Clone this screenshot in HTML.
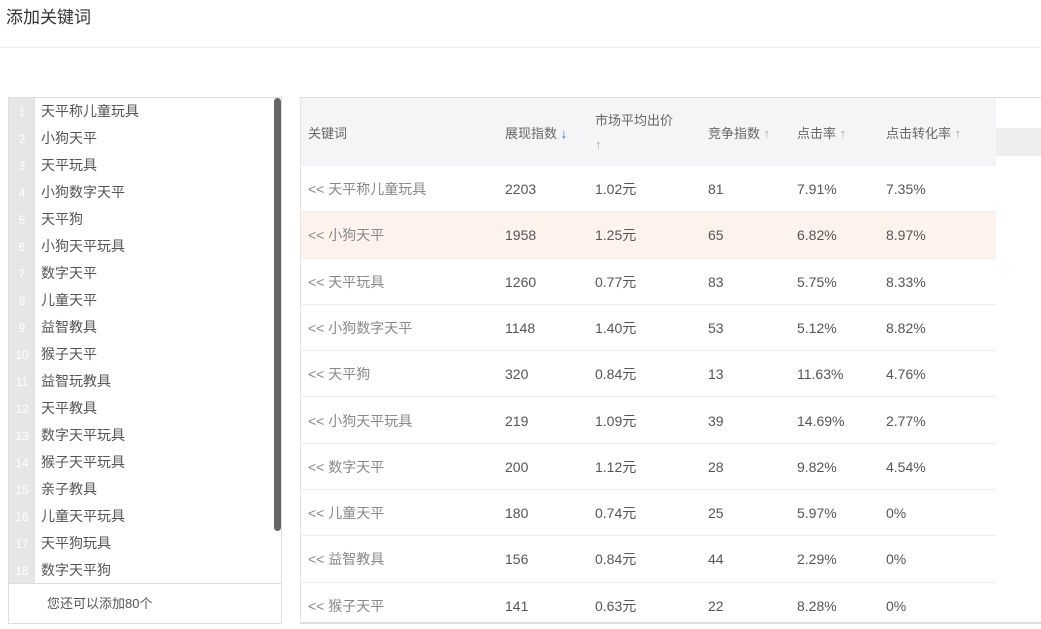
<!DOCTYPE html>
<html><head><meta charset="utf-8"><style>
*{margin:0;padding:0;box-sizing:border-box}
body{width:1041px;height:627px;background:#fff;font-family:"Liberation Sans","Noto Sans CJK SC",sans-serif;color:#555;position:relative;overflow:hidden}
.title{position:absolute;left:6px;top:3px;font-size:17px;color:#333}
.hr{position:absolute;left:0;top:47px;width:1041px;height:1px;background:#eee}
.lbox{position:absolute;left:8px;top:97px;width:274px;height:527px;border:1px solid #ddd;background:#fff}
.gut{position:absolute;left:0;top:0;width:26px;height:485px;background:#e6e6e6}
.li{position:absolute;left:0;height:27px;line-height:27px;font-size:14px;color:#555;white-space:nowrap}
.li b{display:inline-block;width:26px;text-align:center;color:#fff;font-weight:normal;font-size:12px}
.li span{margin-left:6px}
.sb{position:absolute;left:265px;top:0;width:7px;height:433px;background:#666;border-radius:4px}
.foot{position:absolute;left:0;top:485px;width:272px;height:40px;border-top:1px solid #ddd;font-size:13px;line-height:40px;padding-left:38px;color:#555}
.tbl{position:absolute;left:300px;top:97px;width:741px;height:527px;border-top:1px solid #ddd;border-left:1px solid #e5e5e5;border-bottom:2px solid #ddd}
.hd{position:absolute;left:0;top:0;width:695px;height:68px;background:#f5f5f7;font-size:13px;color:#666}
.hd div{position:absolute}
.ext{position:absolute;left:695px;top:30px;width:46px;height:28px;background:#eeeef0}
.ar{color:#aaa;font-size:13px;font-weight:bold}
.row{position:absolute;left:0;width:695px;height:46.3px;border-bottom:1px solid #eee;font-size:14px;color:#555}
.row div{position:absolute;top:0;line-height:46px}
.row .k{color:#888}
</style></head><body>
<div class="title">添加关键词</div>
<div class="hr"></div>
<div class="lbox">
<div class="gut"></div>
<div class="li" style="top:0"><b>1</b><span>天平称儿童玩具</span></div>
<div class="li" style="top:27px"><b>2</b><span>小狗天平</span></div>
<div class="li" style="top:54px"><b>3</b><span>天平玩具</span></div>
<div class="li" style="top:81px"><b>4</b><span>小狗数字天平</span></div>
<div class="li" style="top:108px"><b>5</b><span>天平狗</span></div>
<div class="li" style="top:135px"><b>6</b><span>小狗天平玩具</span></div>
<div class="li" style="top:162px"><b>7</b><span>数字天平</span></div>
<div class="li" style="top:189px"><b>8</b><span>儿童天平</span></div>
<div class="li" style="top:216px"><b>9</b><span>益智教具</span></div>
<div class="li" style="top:243px"><b>10</b><span>猴子天平</span></div>
<div class="li" style="top:270px"><b>11</b><span>益智玩教具</span></div>
<div class="li" style="top:297px"><b>12</b><span>天平教具</span></div>
<div class="li" style="top:324px"><b>13</b><span>数字天平玩具</span></div>
<div class="li" style="top:351px"><b>14</b><span>猴子天平玩具</span></div>
<div class="li" style="top:378px"><b>15</b><span>亲子教具</span></div>
<div class="li" style="top:405px"><b>16</b><span>儿童天平玩具</span></div>
<div class="li" style="top:432px"><b>17</b><span>天平狗玩具</span></div>
<div class="li" style="top:459px"><b>18</b><span>数字天平狗</span></div>
<div class="sb"></div>
<div class="foot">您还可以添加80个</div>
</div>
<div class="tbl">
<div class="hd">
<div style="left:7px;top:25px">关键词</div>
<div style="left:204px;top:25px">展现指数 <span style="color:#1a66cc;font-weight:bold">↓</span></div>
<div style="left:294px;top:12px">市场平均出价</div>
<div style="left:294px;top:39px" class="ar">↑</div>
<div style="left:407px;top:25px">竞争指数 <span class="ar">↑</span></div>
<div style="left:496px;top:25px">点击率 <span class="ar">↑</span></div>
<div style="left:585px;top:25px">点击转化率 <span class="ar">↑</span></div>
</div>
<div class="ext"></div>
<div class="row" style="top:68px"><div class="k" style="left:7px">&lt;&lt; 天平称儿童玩具</div><div style="left:204px">2203</div><div style="left:294px">1.02元</div><div style="left:407px">81</div><div style="left:496px">7.91%</div><div style="left:585px">7.35%</div></div>
<div class="row" style="top:114.3px;background:#fdf3ec"><div class="k" style="left:7px">&lt;&lt; 小狗天平</div><div style="left:204px">1958</div><div style="left:294px">1.25元</div><div style="left:407px">65</div><div style="left:496px">6.82%</div><div style="left:585px">8.97%</div></div>
<div class="row" style="top:160.6px"><div class="k" style="left:7px">&lt;&lt; 天平玩具</div><div style="left:204px">1260</div><div style="left:294px">0.77元</div><div style="left:407px">83</div><div style="left:496px">5.75%</div><div style="left:585px">8.33%</div></div>
<div class="row" style="top:206.9px"><div class="k" style="left:7px">&lt;&lt; 小狗数字天平</div><div style="left:204px">1148</div><div style="left:294px">1.40元</div><div style="left:407px">53</div><div style="left:496px">5.12%</div><div style="left:585px">8.82%</div></div>
<div class="row" style="top:253.2px"><div class="k" style="left:7px">&lt;&lt; 天平狗</div><div style="left:204px">320</div><div style="left:294px">0.84元</div><div style="left:407px">13</div><div style="left:496px">11.63%</div><div style="left:585px">4.76%</div></div>
<div class="row" style="top:299.5px"><div class="k" style="left:7px">&lt;&lt; 小狗天平玩具</div><div style="left:204px">219</div><div style="left:294px">1.09元</div><div style="left:407px">39</div><div style="left:496px">14.69%</div><div style="left:585px">2.77%</div></div>
<div class="row" style="top:345.8px"><div class="k" style="left:7px">&lt;&lt; 数字天平</div><div style="left:204px">200</div><div style="left:294px">1.12元</div><div style="left:407px">28</div><div style="left:496px">9.82%</div><div style="left:585px">4.54%</div></div>
<div class="row" style="top:392.1px"><div class="k" style="left:7px">&lt;&lt; 儿童天平</div><div style="left:204px">180</div><div style="left:294px">0.74元</div><div style="left:407px">25</div><div style="left:496px">5.97%</div><div style="left:585px">0%</div></div>
<div class="row" style="top:438.4px"><div class="k" style="left:7px">&lt;&lt; 益智教具</div><div style="left:204px">156</div><div style="left:294px">0.84元</div><div style="left:407px">44</div><div style="left:496px">2.29%</div><div style="left:585px">0%</div></div>
<div class="row" style="top:484.7px;border-bottom:none"><div class="k" style="left:7px">&lt;&lt; 猴子天平</div><div style="left:204px">141</div><div style="left:294px">0.63元</div><div style="left:407px">22</div><div style="left:496px">8.28%</div><div style="left:585px">0%</div></div>
</div>
</body></html>
